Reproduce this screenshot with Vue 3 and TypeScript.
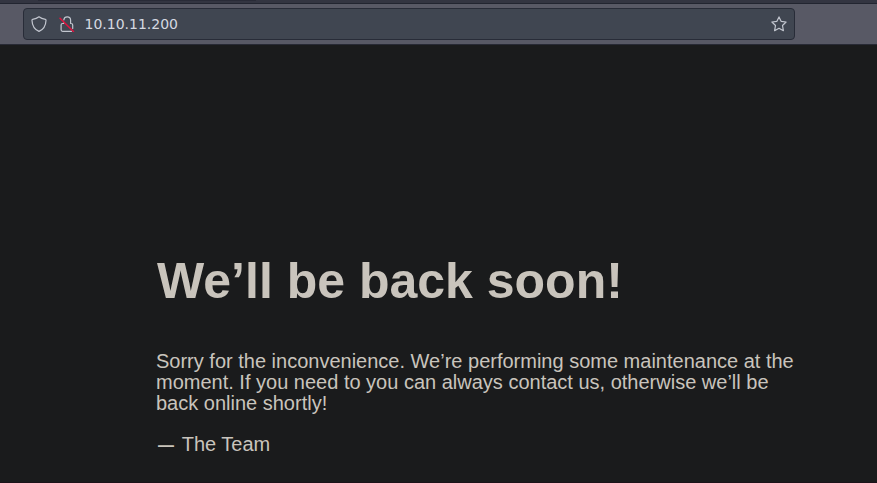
<script setup lang="ts">
const address: string = '10.10.11.200'
const messageLines: string[] = [
  'Sorry for the inconvenience. We’re performing some maintenance at the',
  'moment. If you need to you can always contact us, otherwise we’ll be',
  'back online shortly!',
]
</script>

<template>
  <div class="window">
    <div class="tab-strip"><div class="active-tab"></div></div>
    <header class="toolbar">
      <div class="url-bar">
        <svg class="icon shield" viewBox="0 0 16 16" aria-hidden="true">
          <path d="M8 .8C6.2 2.4 3.9 3.1 1.6 3.3Q.9 3.4 1 4.4C1.2 9.3 3 13.2 8 15.4C13 13.2 14.8 9.3 15 4.4Q15.1 3.4 14.4 3.3C12.1 3.1 9.8 2.4 8 .8Z" />
        </svg>
        <svg class="icon lock" viewBox="0 0 16 16" aria-hidden="true">
          <path d="M4.8 3.8C5.1 2 6.4 .9 8.2 .9C10.2 .9 11.6 2.3 11.6 4.3V7.5H12.2Q13.7 7.5 13.7 9V12.5M12.5 15.3H3.6Q2.1 15.3 2.1 13.8V9Q2.1 7.5 3.6 7.5H4.8V6.5" />
          <path class="slash" d="M1 2.2L14.5 15.5" />
        </svg>
        <span class="address">{{ address }}</span>
        <svg class="icon star" viewBox="0 0 16 16" aria-hidden="true">
          <path d="M8 .9L10.1 5.3L15.1 6L11.5 9.5L12.4 14.7L8 12.3L3.6 14.7L4.5 9.5L.9 6L5.9 5.3Z" />
        </svg>
      </div>
    </header>
    <main class="page">
      <article>
        <h1>We’ll be back soon!</h1>
        <p class="message">
          <span v-for="line in messageLines" :key="line" class="line">{{ line }}</span>
        </p>
        <p class="signature"><span class="dash">—</span> The Team</p>
      </article>
    </main>
  </div>
</template>

<style>
body {
  margin: 0;
  background: #1a1b1c;
}
</style>

<style scoped>
.window {
  box-sizing: border-box;
  height: 483px;
  display: flex;
  flex-direction: column;
  overflow: hidden;
  background: #1a1b1c;
  border-bottom: 1px solid #1b1219;
}
.tab-strip {
  box-sizing: border-box;
  flex: 0 0 4px;
  background: #333541;
  border-bottom: 1px solid #222530;
}
.active-tab {
  width: 218px;
  height: 1px;
  margin-left: 38px;
  background: #292b37;
}
.toolbar {
  box-sizing: border-box;
  flex: 0 0 41px;
  padding: 4px 82px 0 23px;
  background: #585965;
  border-bottom: 1px solid #282a35;
}
.url-bar {
  box-sizing: border-box;
  height: 32px;
  display: flex;
  align-items: center;
  padding: 0 7px;
  background: #404651;
  border: 1px solid #282c38;
  border-radius: 4px;
}
.icon {
  width: 16px;
  height: 16px;
  flex: none;
  fill: none;
  stroke: #c2c6cf;
  stroke-width: 1.2;
  stroke-linejoin: round;
  stroke-linecap: round;
}
.lock {
  margin-left: 12px;
}
.slash {
  stroke: #e0143f;
  stroke-width: 1.5;
}
.address {
  flex: 1;
  margin-left: 9.5px;
  font: 14px/20px "DejaVu Sans", sans-serif;
  color: #d5d9e1;
}
.page {
  flex: 1;
  padding: 206px 0 0 156px;
  font-family: "Liberation Sans", Arial, sans-serif;
  color: #c9c4bc;
}
h1 {
  margin: 0 0 0 1px;
  font-size: 50px;
  line-height: 60px;
  white-space: nowrap;
}
p {
  margin: 0;
  font-size: 20px;
  line-height: 21px;
}
.message {
  margin-top: 40px;
}
.line {
  display: block;
  white-space: nowrap;
}
.signature {
  margin-top: 20px;
}
.dash {
  margin: 0 2.5px 0 2px;
  font-size: 16px;
  font-weight: bold;
  line-height: 1;
}
</style>
